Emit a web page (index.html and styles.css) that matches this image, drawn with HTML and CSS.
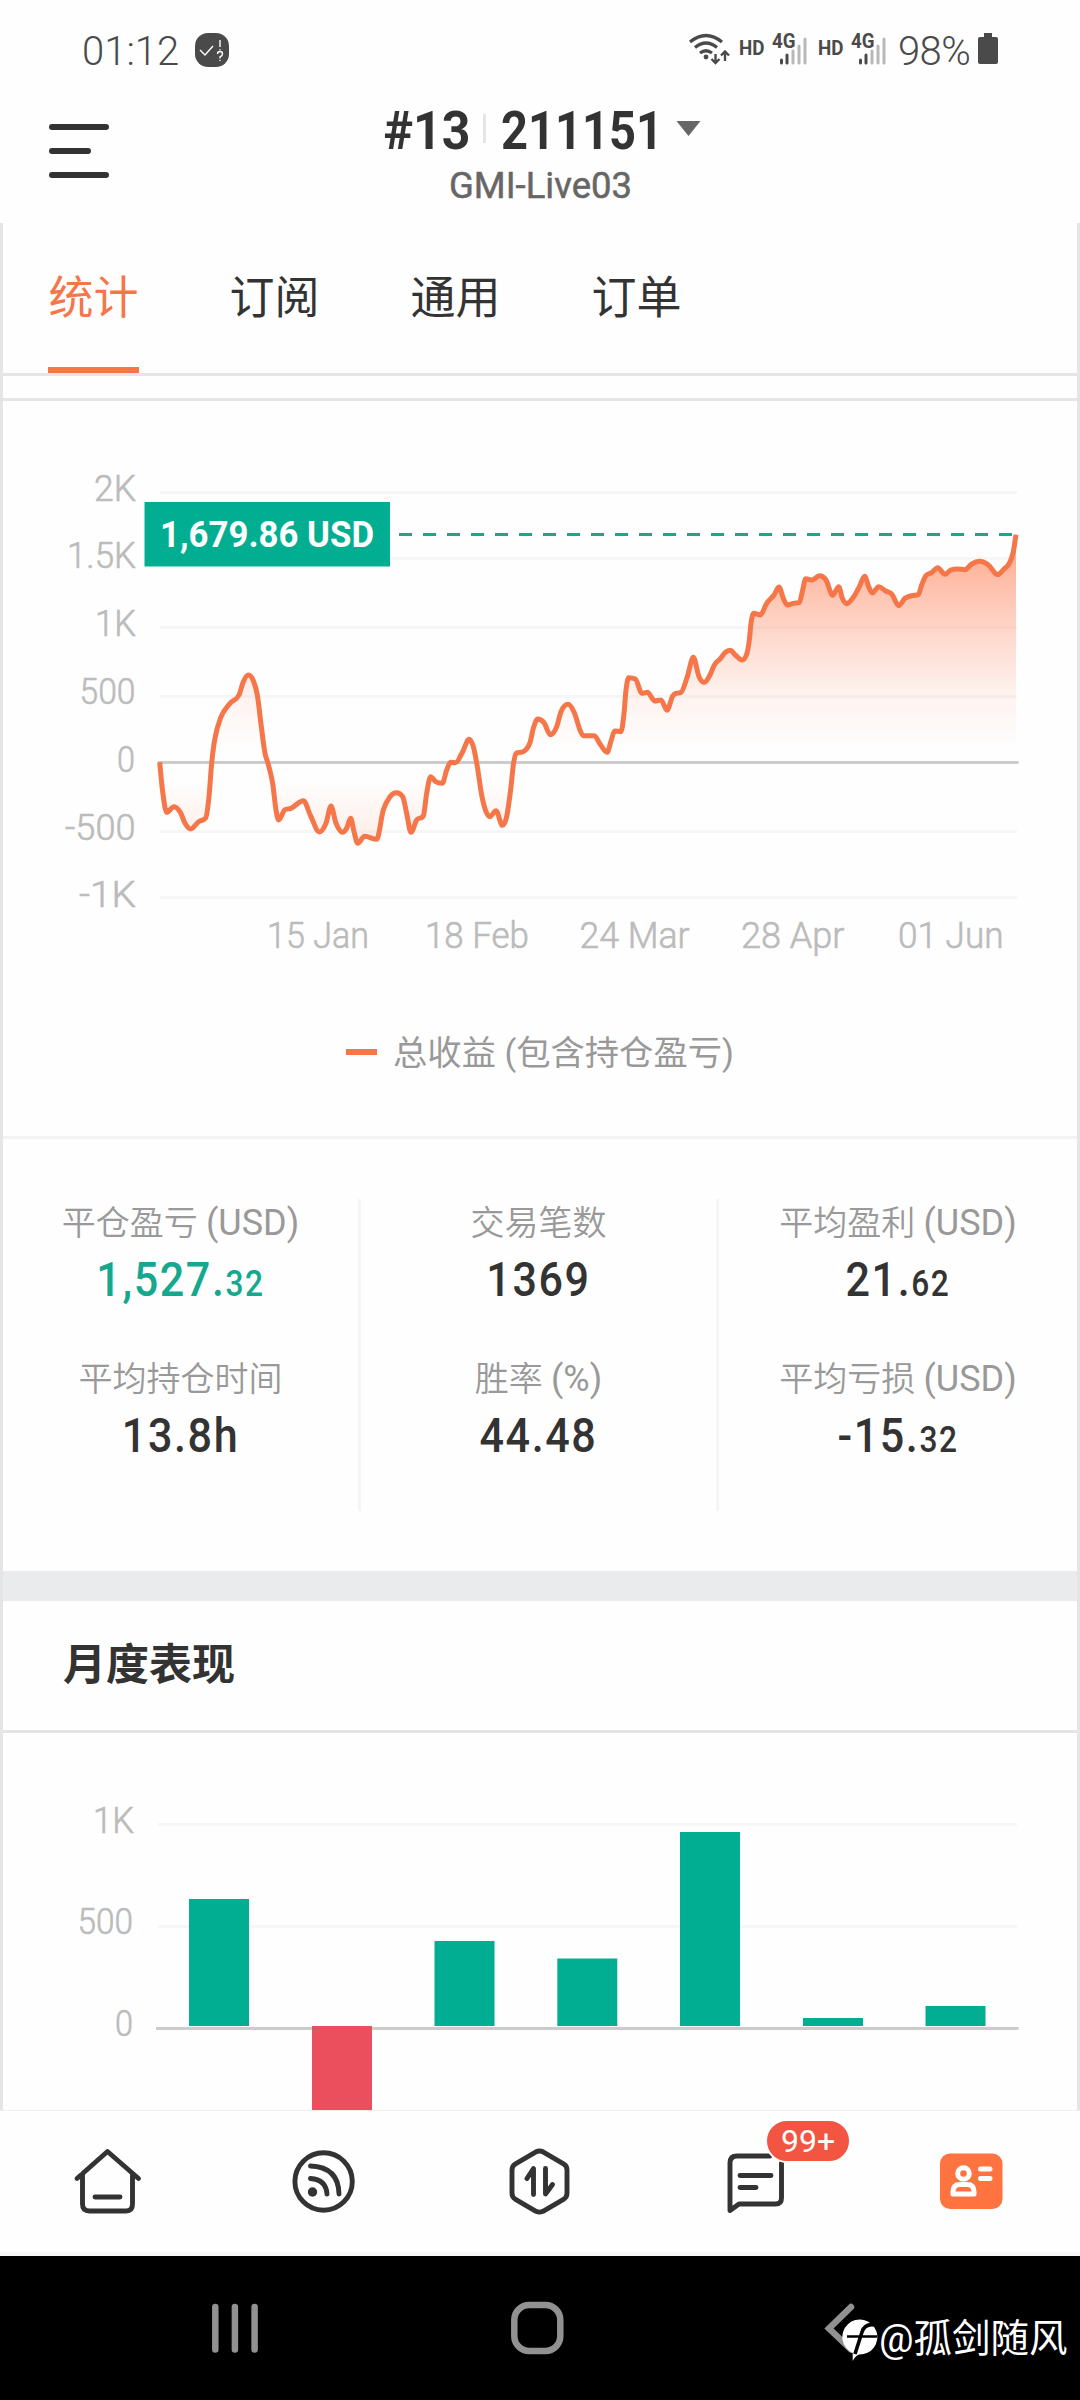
FILE: index.html
```html
<!DOCTYPE html>
<html lang="zh-CN">
<head>
<meta charset="utf-8">
<title>GMI-Live03</title>
<link rel="stylesheet" href="styles.css">
</head>
<body>
<div class="status">
  <span class="clock">01:12</span>
  <svg class="app-dot" viewBox="0 0 34 34"><rect width="34" height="34" rx="13" fill="#4a4a4a"/><path d="M5 17l5 5 8-9M25 7v7M25 16.300v1M22.500 21q0-2.500 2.500-2.500t2.500 2.200-2.500 3.300v1.500M25 27v1" fill="none" stroke="#fff" stroke-width="1.400"/></svg>
  <svg class="signals" viewBox="685 30 213 38">
    <g fill="none" stroke="#4a4a4a" stroke-width="3.200">
      <path d="M690 42q16-13 32 0M695 47.500q11-9 22 0M700 53q6-4.500 12 0"/>
      <path d="M715.500 54v8M711.500 59l4 4 4-4M725 61v-9M721 55.500l4-4 4 4" stroke-width="2.400"/>
    </g>
    <circle cx="706" cy="57" r="2.400" fill="#4a4a4a"/>
    <g id="sim">
      <text x="739" y="55" class="sig" textLength="25.500">HD</text>
      <text x="772" y="48" class="sig" textLength="23.500">4G</text>
      <g stroke-width="3" stroke-linecap="round"><path d="M781.500 60v3M787 55v8" stroke="#4a4a4a"/><path d="M793 51v12M799 46v17M805 39v24" stroke="#b8b8b8"/></g>
    </g>
    <use href="#sim" x="79"/>
  </svg>
  <span class="percent">98%</span>
  <svg class="battery" viewBox="0 0 20 31"><path d="M6 0h8v4h4q2 0 2 2v23q0 2-2 2h-16q-2 0-2-2v-23q0-2 2-2h4z" fill="#4a4a4a"/></svg>
</div>
<header class="header">
  <svg class="menu" viewBox="0 0 60 54"><path d="M3 3h54M3 27h36M3 51h54" stroke="#333" stroke-width="6" stroke-linecap="round"/></svg>
  <svg class="account" viewBox="380 100 340 110">
    <text x="383.500" y="149" class="acct" textLength="87">#13</text>
    <path d="M484.500 114v29" stroke="#e5e5e5" stroke-width="3"/>
    <text x="501" y="149" class="acct" textLength="162">211151</text>
    <path d="M676.500 121h24l-12 15z" fill="#666"/>
    <text x="449" y="198" class="server" textLength="183">GMI-Live03</text>
  </svg>
</header>
<main class="page">
  <nav class="tabs"><a class="tab active">统计</a><a class="tab">订阅</a><a class="tab">通用</a><a class="tab">订单</a></nav>
  <div class="gap"></div>
  <section class="growth">
    <svg class="growth-chart" viewBox="3 401 1074 599">
      <defs><linearGradient id="fade" gradientUnits="userSpaceOnUse" x1="0" y1="534" x2="0" y2="850">
        <stop offset="0" stop-color="#ff6f40" stop-opacity=".62"/><stop offset=".3" stop-color="#ff6f40" stop-opacity=".28"/><stop offset=".51" stop-color="#ff6f40" stop-opacity=".08"/><stop offset=".68" stop-color="#ff6f40" stop-opacity="0"/><stop offset=".78" stop-color="#ff6f40" stop-opacity="0"/><stop offset="1" stop-color="#ff6f40" stop-opacity=".14"/>
      </linearGradient></defs>
      <path class="grid" d="M160 492.500h857M160 558.500h857M160 627.500h857M160 696.500h857M160 831.500h857M160 897.500h857"/>
      <path class="zero" d="M158 762.500h860.500"/>
      <path id="area" fill="url(#fade)"/>
      <path d="M399 534.500h614" stroke="#24a189" stroke-width="3" stroke-dasharray="13 11"/>
      <path id="line" fill="none" stroke="#f47649" stroke-width="5" stroke-linejoin="round"/>
      <g class="axis">
        <text x="94" y="501" textLength="42">2K</text><text x="67" y="568" textLength="69">1.5K</text><text x="95" y="636" textLength="41">1K</text>
        <text x="79.500" y="704" textLength="56">500</text><text x="117" y="772" textLength="18">0</text><text x="65" y="840" textLength="70.500">-500</text><text x="79" y="907" textLength="57">-1K</text>
        <text x="267" y="948" textLength="102">15 Jan</text><text x="425" y="948" textLength="104">18 Feb</text><text x="579.500" y="948" textLength="110">24 Mar</text><text x="741" y="948" textLength="103.500">28 Apr</text><text x="898" y="948" textLength="105.500">01 Jun</text>
      </g>
      <rect x="144.500" y="502" width="245.500" height="64.500" fill="#02ae92"/>
      <text x="160" y="547" class="tag" textLength="214">1,679.86 USD</text>
    </svg>
    <div class="legend"><i></i><span>总收益 (包含持仓盈亏)</span></div>
  </section>
  <section class="stats">
    <div class="col">
      <div class="stat"><div class="label">平仓盈亏 <b>(USD)</b></div><div class="value green">1,527.<small>32</small></div></div>
      <div class="stat"><div class="label">平均持仓时间</div><div class="value">13.8h</div></div>
    </div>
    <div class="col">
      <div class="stat"><div class="label">交易笔数</div><div class="value">1369</div></div>
      <div class="stat"><div class="label">胜率 <b>(%)</b></div><div class="value">44.48</div></div>
    </div>
    <div class="col">
      <div class="stat"><div class="label">平均盈利 <b>(USD)</b></div><div class="value">21.<small>62</small></div></div>
      <div class="stat"><div class="label">平均亏损 <b>(USD)</b></div><div class="value">-15.<small>32</small></div></div>
    </div>
  </section>
  <div class="band"></div>
  <h2 class="section-title">月度表现</h2>
  <svg class="monthly-chart" viewBox="3 1733 1074 377">
    <path class="grid" d="M158 1824.500h859M158 1926.500h859"/>
    <path class="zero" d="M156 2028.500h862.500"/>
    <g fill="#02ae92"><rect x="189" y="1899" width="60" height="127"/><rect x="434.500" y="1941" width="60" height="85"/><rect x="557.300" y="1958.500" width="60" height="67.500"/><rect x="680" y="1832" width="60" height="194"/><rect x="803" y="2018" width="60" height="8"/><rect x="925.500" y="2006" width="60" height="20"/></g>
    <rect x="312" y="2026" width="60" height="84" fill="#eb4e5d"/>
    <g class="axis"><text x="93" y="1832.500" textLength="41">1K</text><text x="77.500" y="1933.500" textLength="55.500">500</text><text x="115" y="2035.500" textLength="18">0</text></g>
  </svg>
</main>
<nav class="bottom">
  <a><svg viewBox="72 2146 72 72"><path d="M77 2178.500L107.500 2151.500 138.500 2178.500M82.500 2174v30q0 7 7 7h36.500q6.500 0 6.500-7v-30M95 2197h25"/></svg></a>
  <a><svg viewBox="288 2146 72 72"><circle cx="323.600" cy="2181.500" r="28.700"/><path d="M310.500 2166q28 1 28.500 28M310.500 2178.500q15.500 1 16.500 15.500"/><circle class="solid" cx="312.500" cy="2192" r="4.700"/></svg></a>
  <a><svg viewBox="504 2146 72 72"><path d="M536 2151.800q3.500-1.600 7 0l20.500 12q3.500 2 3.500 6v23.500q0 4-3.500 6l-20.500 12q-3.500 1.600-7 0l-20.500-12q-3.500-2-3.500-6v-23.500q0-4 3.500-6zM527 2178.500l6.500-10v26M545.500 2168.500v25.500l7-9.500"/></svg></a>
  <a><svg viewBox="720 2146 72 72"><path d="M781.500 2163v35q0 6-6 6h-36.500l-9 6.500v-47.500q0-7 7-7h33M740 2175.500h31M740 2187.500h16"/></svg><span class="badge">99+</span></a>
  <a><svg viewBox="936 2146 72 72"><rect class="card" x="940" y="2153.500" width="62.500" height="55.500" rx="10"/><g class="face"><circle cx="963.500" cy="2173.500" r="5.800"/><path d="M953 2194v-2.500q0-7 7-7h7q7 0 7 7v2.500zM980.500 2169h9.500M980.500 2178.500h9.500"/></g></svg></a>
</nav>
<footer class="system">
  <svg viewBox="0 2256 1080 144">
    <g fill="none" stroke="#919191" stroke-width="6.500" stroke-linecap="round"><path d="M215.300 2307v42.500M234.900 2307v42.500M254.600 2307v42.500"/><rect x="514.300" y="2305" width="46" height="46" rx="15"/><path d="M851 2307l-22 21.500 22 21"/></g>
  </svg>
  <div class="mark">
    <svg viewBox="840 2318 40 48"><path d="M853.700 2363V2355A17.500 17.500 0 1 1 860 2356.500Q856 2358 853.700 2363z" fill="#fff"/><path d="M876 2327q-10-2-13 7l-7 22" fill="none" stroke="#000" stroke-width="3.600"/><path d="M848 2338.500h30" stroke="#000" stroke-width="2.500"/></svg>
    <span>@孤剑随风</span>
  </div>
</footer>
<script src="chart.js"></script>
</body>
</html>
```
FILE: styles.css
```css
* { box-sizing: border-box; }
body { margin: 0; width: 1080px; height: 2400px; display: flex; flex-direction: column; overflow: hidden; background: #fefefe; color: #333; font-family: Roboto, "Noto Sans CJK SC", sans-serif; }
svg { display: block; flex: none; }
.status { height: 100px; padding: 2px 82px 0 82px; display: flex; align-items: center; color: #4a4a4a; font-size: 40px; }
.clock { width: 113px; font-weight: 350; }
.app-dot { width: 34px; height: 34px; margin-top: -2px; }
.signals { width: 213px; height: 38px; margin: -4px 0 0 456px; }
.sig { font: 700 19.500px Roboto, sans-serif; fill: #4a4a4a; }
.percent { width: 80px; letter-spacing: -.6px; font-weight: 350; }
.battery { width: 20px; height: 31px; margin-top: -5px; }
.header { height: 123px; padding-left: 49px; display: flex; }
.menu { width: 60px; height: 54px; margin-top: 24px; }
.account { width: 340px; height: 110px; margin-left: 271px; }
.acct { font: 700 53.500px Roboto, sans-serif; fill: #333; }
.server { font: 400 36.500px Roboto, sans-serif; fill: #666; stroke: #666; stroke-width: .5px; }
.page { height: 1887px; border: solid #e5e5e5; border-width: 0 3px; display: flex; flex-direction: column; overflow: hidden; }
.tabs { height: 153px; padding-left: 45px; display: flex; gap: 90px; border-bottom: 3px solid #e5e5e5; font-size: 45px; }
.tab { width: 91px; height: 150px; line-height: 152px; text-align: center; white-space: nowrap; }
.tab.active { color: #f47649; border-bottom: 6px solid #f47649; }
.gap { height: 25px; border-bottom: 3px solid #e5e5e5; }
.growth { height: 738px; border-bottom: 3px solid #f1f3f4; }
.growth-chart { width: 1074px; height: 599px; }
.grid { stroke: #f6f6f6; stroke-width: 3; }
.zero { stroke: #ccc; stroke-width: 3; }
.axis { font: 300 36px Roboto, sans-serif; fill: #bbb; stroke: #bbb; stroke-width: .6px; }
.tag { font: 700 36px Roboto, sans-serif; fill: #fff; }
.legend { height: 104px; padding-bottom: 1px; display: flex; align-items: center; justify-content: center; gap: 16px; color: #999; font-size: 34.300px; }
.legend i { width: 31px; height: 6px; background: #f47649; }
.legend span { position: relative; top: -2px; }
.stats { height: 432px; padding: 60px 0; display: grid; grid-template-columns: 358px 358px 358px; }
.col { height: 312px; border-right: 3px solid #f3f5f6; }
.col:last-child { border: 0; }
.stat { height: 156px; text-align: center; white-space: nowrap; }
.label { height: 48px; line-height: 48px; color: #999; font-size: 34px; font-weight: 350; }
.label b { font-size: 36px; font-weight: 400; }
.value { height: 60px; line-height: 65px; font-size: 49px; font-weight: 500; letter-spacing: 1.800px; transform: scaleX(.88); }
.value small { font-size: 36px; }
.green { color: #15a88e; }
.band { height: 30px; background: #eaebed; }
.section-title { height: 132px; margin: 0; padding-left: 60px; border-bottom: 3px solid #e4e4e4; line-height: 129px; font-size: 43px; font-weight: 700; }
.monthly-chart { width: 1074px; height: 377px; }
.bottom { height: 146px; border-top: 1px solid #eee; border-bottom: 4px solid #f8f8f8; display: grid; grid-template-columns: repeat(5, 1fr); }
.bottom a { position: relative; padding: 35px 0 0 72px; }
.bottom svg { width: 72px; height: 72px; fill: none; stroke: #333; stroke-width: 4.900; stroke-linecap: round; stroke-linejoin: round; }
.bottom .solid { fill: #333; stroke: none; }
.bottom .card { fill: #ff7341; stroke: none; }
.bottom .face { stroke: #fff; stroke-width: 5; }
.badge { position: absolute; left: 117px; top: 8px; width: 86px; height: 44px; border: 2px solid #fefefe; border-radius: 22px; background: #f25643; color: #fff; font-size: 32px; line-height: 40px; text-align: center; }
.system { position: relative; height: 144px; background: #000; }
.system > svg { width: 1080px; height: 144px; }
.mark { position: absolute; left: 839px; top: 60px; display: flex; color: #fff; font-size: 38.500px; line-height: 45px; white-space: nowrap; }
.mark svg { width: 40px; height: 48px; }
```
FILE: chart.js
```js
// Equity curve samples in thirds of a pixel, offset from the plot origin.
const samples = `359,967 368,1055 380,1117 402,1100 421,1117 435,1150 452,1167 476,1145 497,1134 507,1070 515,970 524,900 542,833 570,790 597,765 610,725 625,705 640,722 652,765 664,860 675,940 684,970 698,1030 708,1110 716,1140 735,1109 753,1105 790,1082 812,1128 838,1176 858,1150 873,1098 888,1150 908,1177 920,1165 932,1135 942,1175 953,1210 974,1189 1010,1198 1030,1110 1050,1070 1069,1058 1088,1070 1100,1120 1113,1177 1130,1140 1150,1128 1160,1060 1172,1010 1187,1025 1207,1030 1220,990 1232,967 1247,968 1268,935 1287,898 1300,920 1312,980 1325,1065 1338,1115 1350,1130 1368,1112 1387,1156 1400,1130 1413,1040 1420,975 1428,940 1450,935 1470,908 1480,865 1493,837 1512,848 1531,884 1550,860 1563,815 1584,793 1603,818 1620,870 1630,887 1663,887 1680,912 1701,937 1714,900 1724,873 1743,875 1752,820 1758,750 1766,713 1786,717 1806,760 1822,757 1845,783 1863,780 1881,811 1898,768 1908,760 1922,758 1942,710 1960,652 1977,710 1993,727 2010,705 2023,675 2042,655 2055,638 2071,631 2086,645 2106,660 2120,643 2128,600 2133,550 2141,520 2161,525 2180,490 2202,465 2217,441 2230,475 2242,495 2260,490 2278,488 2288,450 2297,416 2316,420 2338,407 2358,420 2378,466 2396,440 2407,475 2420,491 2440,472 2458,440 2474,409 2486,440 2497,459 2516,440 2537,453 2556,463 2576,497 2595,475 2615,467 2635,464 2645,435 2657,408 2675,398 2693,383 2715,403 2732,390 2752,387 2775,389 2795,372 2819,364 2845,375 2873,404 2892,387 2908,370 2920,335 2928,284`;
const pts = samples.split(' ').map(p => { const [x, y] = p.split(','); return [40 + x / 3, 440 + y / 3]; });
// Monotone cubic interpolation keeps every turning point at its sample.
const slope = i => (pts[i + 1][1] - pts[i][1]) / (pts[i + 1][0] - pts[i][0]);
const tangents = pts.map((p, i) => {
  if (i === 0) return slope(0);
  if (i === pts.length - 1) return slope(i - 1);
  const a = slope(i - 1), b = slope(i);
  if (a * b <= 0) return 0;
  return Math.sign(a) * Math.min(Math.abs(a + b) / 2, 2.5 * Math.abs(a), 2.5 * Math.abs(b));
});
let d = `M${pts[0]}`;
for (let i = 1; i < pts.length; i++) {
  const [x0, y0] = pts[i - 1], [x1, y1] = pts[i], h = (x1 - x0) / 3;
  d += `C${x0 + h},${y0 + h * tangents[i - 1]} ${x1 - h},${y1 - h * tangents[i]} ${x1},${y1}`;
}
document.getElementById('line').setAttribute('d', d);
document.getElementById('area').setAttribute('d', d + 'V762H160Z');
document.querySelectorAll('text[textLength]').forEach(t => t.setAttribute('lengthAdjust', 'spacingAndGlyphs'));
```
